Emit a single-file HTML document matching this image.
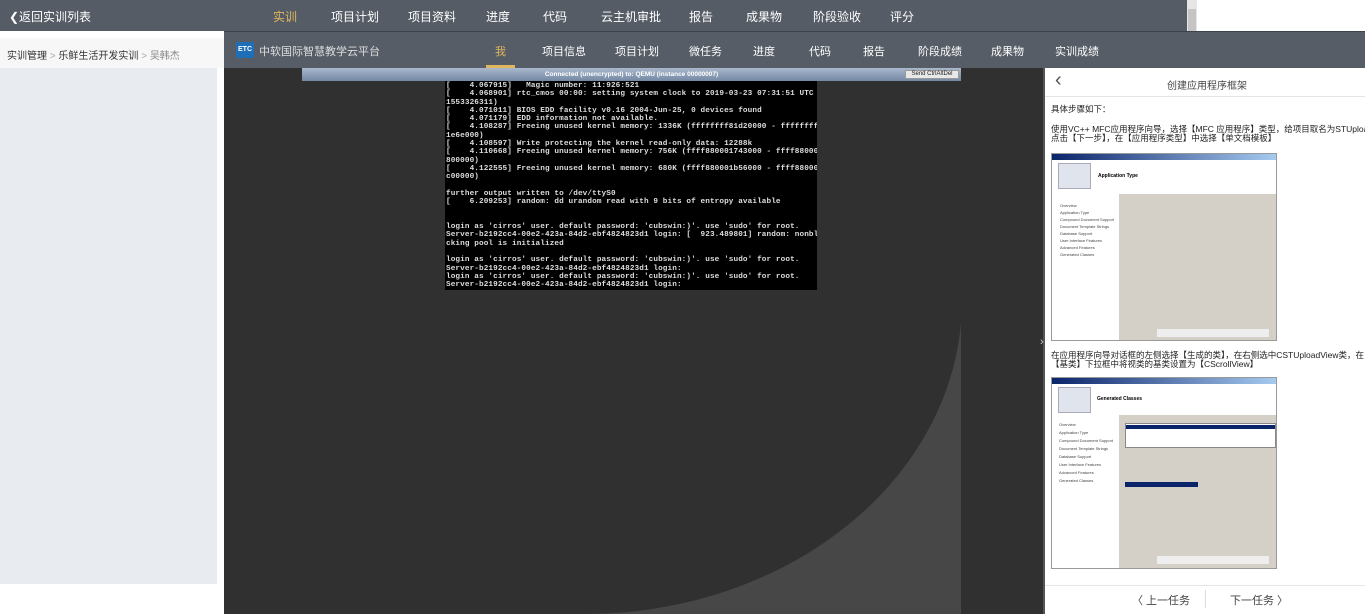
<!DOCTYPE html>
<html><head><meta charset="utf-8"><style>
*{margin:0;padding:0;box-sizing:border-box}
body{width:1365px;height:614px;overflow:hidden;position:relative;background:#fff;font-family:"Liberation Sans","Noto Sans CJK SC",sans-serif;font-size:12px}
.a{position:absolute}
.top{left:0;top:0;width:1187px;height:31px;background:#555c65}
.top span{position:absolute;top:8px;color:#fff;font-size:12px}
.sb{left:1187px;top:0;width:10px;height:31px;background:#e6e6e6}
.bar2{left:224px;top:31px;width:1141px;height:37px;background:#565d66;border-top:1px solid #3d434b}
.bar2 span{position:absolute;top:11px;color:#fff;font-size:11px}
.left{left:0;top:31px;width:224px;height:583px;background:#fff}
.crumb{left:0;top:38px;width:224px;height:30px;background:#f7f7f7;font-size:10px;color:#333;padding:9px 0 0 7px}
.lbody{left:0;top:68px;width:217px;height:516px;background:#e8ebef}
.card{left:217px;background:#fff;width:7px;border-radius:3px 0 0 3px}
.center{left:224px;top:68px;width:819px;height:546px;background:#303030;overflow:hidden}
.term{left:445px;top:81px;width:372px;height:209px;background:#000;color:#ddd;font-family:"Liberation Mono",monospace;font-size:7.7px;line-height:8.3px;white-space:pre;padding:1px 0 0 1px;overflow:hidden;font-weight:bold;letter-spacing:0.1px}
.right{left:1045px;top:68px;width:320px;height:546px;background:#fff}
.ct{color:#222;font-size:8.5px;line-height:8.5px;white-space:nowrap}
</style></head><body>
<div class="a top">
<span style="left:9px">❮返回实训列表</span>
<span style="left:273px;color:#e0b75e">实训</span>
<span style="left:331px">项目计划</span>
<span style="left:408px">项目资料</span>
<span style="left:486px">进度</span>
<span style="left:543px">代码</span>
<span style="left:601px">云主机审批</span>
<span style="left:689px">报告</span>
<span style="left:746px">成果物</span>
<span style="left:813px">阶段验收</span>
<span style="left:890px">评分</span>
</div>
<div class="a sb"><div class="a" style="left:1px;top:9px;width:8px;height:22px;background:#c4c4c4"></div></div>
<div class="a left"></div>
<div class="a crumb">实训管理 <span style="color:#aaa">&gt;</span> 乐鲜生活开发实训 <span style="color:#aaa">&gt;</span> <span style="color:#888">吴韩杰</span></div>
<div class="a lbody"></div>
<div class="a card" style="top:81px;height:83px"></div>
<div class="a card" style="top:175px;height:127px"></div>
<div class="a card" style="top:313px;height:271px"></div>
<div class="a bar2">
<div class="a" style="left:12px;top:10px;width:18px;height:16px;background:#1e6fb8;color:#fff;font-size:7px;font-weight:bold;text-align:center;line-height:16px;border-radius:2px">ETC</div>
<span style="left:35px;color:#ddd">中软国际智慧教学云平台</span>
<span style="left:271px;color:#e0b75e">我</span>
<div class="a" style="left:262px;top:33px;width:29px;height:3px;background:#e0b75e"></div>
<span style="left:318px">项目信息</span>
<span style="left:391px">项目计划</span>
<span style="left:465px">微任务</span>
<span style="left:529px">进度</span>
<span style="left:585px">代码</span>
<span style="left:639px">报告</span>
<span style="left:694px">阶段成绩</span>
<span style="left:767px">成果物</span>
<span style="left:831px">实训成绩</span>
</div>
<div class="a center">
<div class="a" style="left:361px;top:232px;width:376px;height:314px;background:#474747"></div>
<div class="a" style="left:-16px;top:-82px;width:754px;height:628px;border-radius:50%;background:#303030"></div>
<div class="a" style="left:78px;top:0;width:659px;height:13px;background:linear-gradient(#a9b8cc,#7488a4);color:#fff;font-size:6.5px;text-align:center;line-height:13px;font-weight:bold">Connected (unencrypted) to: QEMU (instance 00000007)</div>
<div class="a" style="left:681px;top:2px;width:54px;height:9px;background:#e8e8e8;border:1px solid #999;color:#222;font-size:6px;line-height:7px;text-align:center">Send CtrlAltDel</div>
</div>
<div class="a term">[    4.067915]   Magic number: 11:926:521
[    4.068901] rtc_cmos 00:00: setting system clock to 2019-03-23 07:31:51 UTC (
1553326311)
[    4.071011] BIOS EDD facility v0.16 2004-Jun-25, 0 devices found
[    4.071179] EDD information not available.
[    4.108287] Freeing unused kernel memory: 1336K (ffffffff81d20000 - ffffffff8
1e6e000)
[    4.108597] Write protecting the kernel read-only data: 12288k
[    4.110668] Freeing unused kernel memory: 756K (ffff880001743000 - ffff880001
800000)
[    4.122555] Freeing unused kernel memory: 680K (ffff880001b56000 - ffff880001
c00000)

further output written to /dev/ttyS0
[    6.209253] random: dd urandom read with 9 bits of entropy available


login as 'cirros' user. default password: 'cubswin:)'. use 'sudo' for root.
Server-b2192cc4-00e2-423a-84d2-ebf4824823d1 login: [  923.489801] random: nonblo
cking pool is initialized

login as 'cirros' user. default password: 'cubswin:)'. use 'sudo' for root.
Server-b2192cc4-00e2-423a-84d2-ebf4824823d1 login:
login as 'cirros' user. default password: 'cubswin:)'. use 'sudo' for root.
Server-b2192cc4-00e2-423a-84d2-ebf4824823d1 login:</div>
<div class="a" style="left:1043px;top:68px;width:2px;height:546px;background:#555"></div>
<div class="a" style="left:1040px;top:336px;color:#ccc;font-size:11px">›</div>
<div class="a right">
<div class="a" style="left:0;top:0;width:320px;height:29px;border-bottom:1px solid #e5e5e5"></div>
<div class="a" style="left:10px;top:1px;font-size:20px;color:#555">‹</div>
<div class="a" style="left:122px;top:9px;font-size:10px;color:#444">创建应用程序框架</div>
<div class="a ct" style="left:6px;top:37px">具体步骤如下：</div>
<div class="a ct" style="left:6px;top:57px">使用VC++ MFC应用程序向导，选择【MFC 应用程序】类型，给项目取名为STUpload<br>点击【下一步】，在【应用程序类型】中选择【单文档模板】</div>
<div class="a" style="left:6px;top:85px;width:226px;height:188px;background:#d4d0c8;border:1px solid #999">
<div class="a" style="left:0;top:0;width:224px;height:6px;background:linear-gradient(90deg,#0a246a,#a6caf0)"></div>
<div class="a" style="left:0;top:6px;width:224px;height:34px;background:#fff;font-size:5px;font-weight:bold;padding:13px 0 0 46px">Application Type</div>
<div class="a" style="left:6px;top:9px;width:33px;height:26px;background:#e0e4ec;border:1px solid #aab"></div>
<div class="a" style="left:0;top:40px;width:67px;height:146px;background:#fff;font-size:4px;line-height:7px;padding:8px 0 0 8px;color:#444">Overview<br>Application Type<br>Compound Document Support<br>Document Template Strings<br>Database Support<br>User Interface Features<br>Advanced Features<br>Generated Classes</div>
<div class="a" style="left:105px;top:175px;width:112px;height:8px;background:#eee"></div>
</div>
<div class="a ct" style="left:6px;top:283px">在应用程序向导对话框的左侧选择【生成的类】，在右侧选中CSTUploadView类，在<br>【基类】下拉框中将视类的基类设置为【CScrollView】</div>
<div class="a" style="left:6px;top:309px;width:226px;height:192px;background:#d4d0c8;border:1px solid #999">
<div class="a" style="left:0;top:0;width:224px;height:6px;background:linear-gradient(90deg,#0a246a,#a6caf0)"></div>
<div class="a" style="left:0;top:6px;width:224px;height:31px;background:#fff;font-size:5px;font-weight:bold;padding:12px 0 0 45px">Generated Classes</div>
<div class="a" style="left:6px;top:9px;width:33px;height:26px;background:#e0e4ec;border:1px solid #aab"></div>
<div class="a" style="left:0;top:37px;width:67px;height:153px;background:#fff;font-size:4px;line-height:8px;padding:6px 0 0 7px;color:#444">Overview<br>Application Type<br>Compound Document Support<br>Document Template Strings<br>Database Support<br>User Interface Features<br>Advanced Features<br>Generated Classes</div>
<div class="a" style="left:73px;top:45px;width:151px;height:25px;background:#fff;border:1px solid #888"><div style="height:4px;background:#0a246a;margin-top:1px"></div></div>
<div class="a" style="left:73px;top:104px;width:73px;height:5px;background:#0a246a"></div>
<div class="a" style="left:105px;top:178px;width:112px;height:8px;background:#eee"></div>
</div>
<div class="a" style="left:0;top:517px;width:320px;height:29px;border-top:1px solid #e5e5e5"></div>
<div class="a" style="left:87px;top:524px;font-size:11px;color:#444">〈 上一任务</div>
<div class="a" style="left:160px;top:522px;width:1px;height:18px;background:#ddd"></div>
<div class="a" style="left:185px;top:524px;font-size:11px;color:#444">下一任务 〉</div>
</div>
</body></html>
